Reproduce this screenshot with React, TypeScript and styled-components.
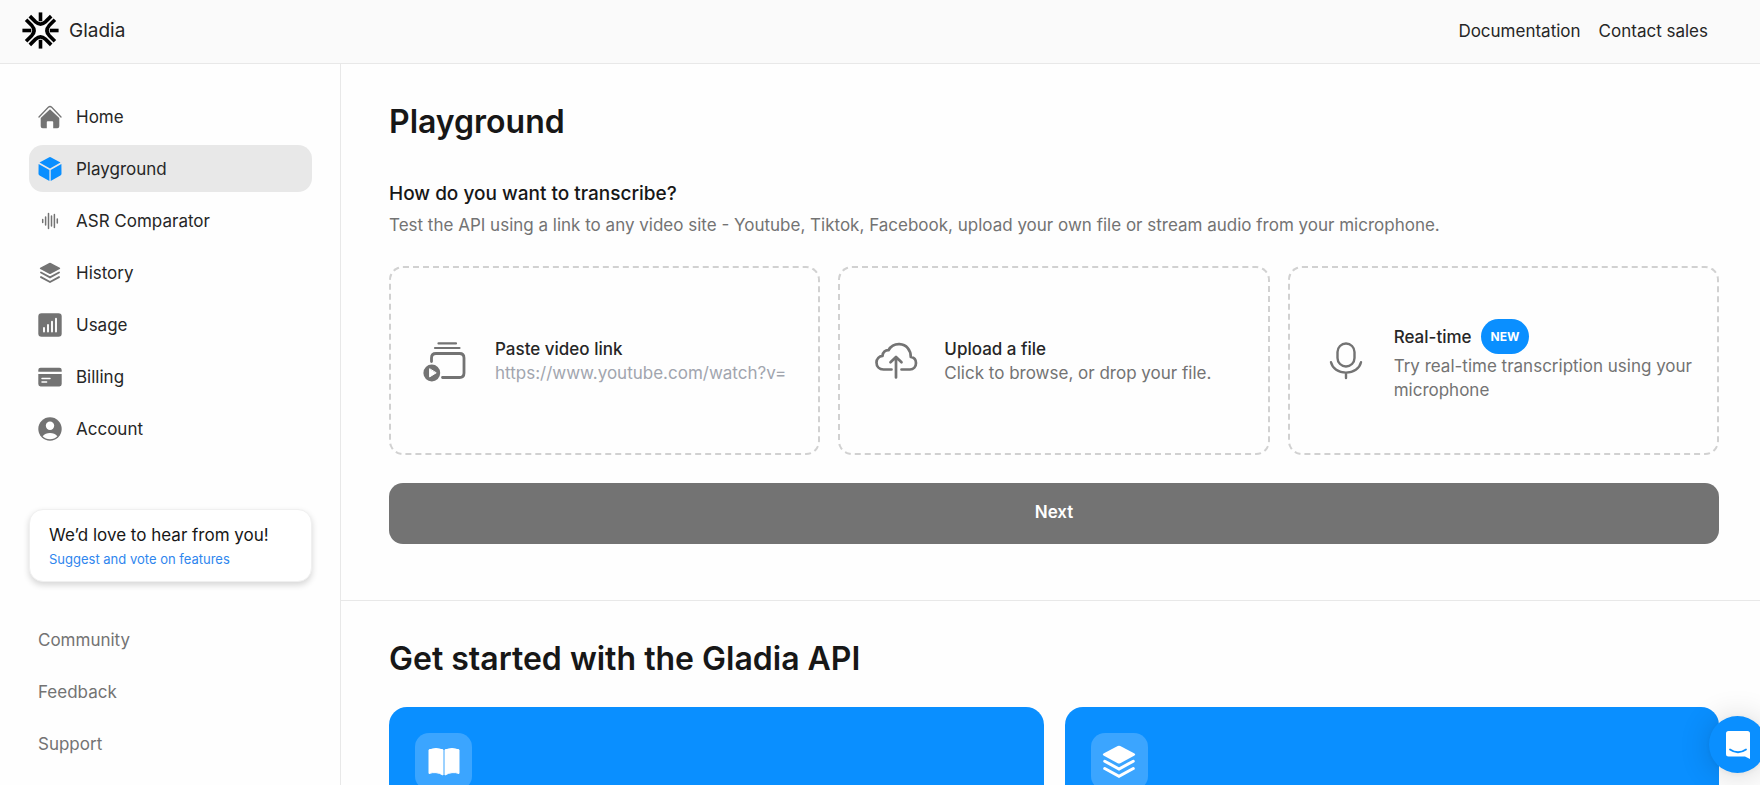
import React from 'react';
import styled, { createGlobalStyle, css } from 'styled-components';

const Global = createGlobalStyle`
  *, *::before, *::after { box-sizing: border-box; }
  body {
    margin: 0;
    background: #fefefe;
    color: #171717;
    font-family: Inter, "Liberation Sans", sans-serif;
    font-size: 16px;
    line-height: 24px;
  }
  h1, h2, p, ul { margin: 0; padding: 0; }
  a { color: inherit; text-decoration: none; }
  button, input { font: inherit; }
  svg { display: block; flex: none; }
`;

const Page = styled.div`
  display: flex;
  flex-direction: column;
  height: 100vh;
  overflow: hidden;
`;

const Header = styled.header`
  display: flex;
  flex: none;
  align-items: center;
  justify-content: space-between;
  height: 64px;
  padding: 0 52px 2px 22px;
  background: #fafafa;
  border-bottom: 1px solid #e8e8e8;
`;

const Brand = styled.a`
  display: flex;
  align-items: center;
  gap: 10px;
  font-size: 19px;
  color: #262626;
`;

const TopLinks = styled.nav`
  display: flex;
  gap: 18px;
  font-size: 17px;
  color: #262626;
`;

const Body = styled.div`
  display: flex;
  flex: 1;
  min-height: 0;
`;

const Sidebar = styled.aside`
  flex: none;
  width: 341px;
  padding: 29px 28px 0 29px;
  border-right: 1px solid #e8e8e8;
  font-size: 17px;
`;

const NavList = styled.ul`
  display: flex;
  flex-direction: column;
  gap: 5px;
  list-style: none;
`;

const NavLink = styled.a<{ $active?: boolean; $muted?: boolean }>`
  display: flex;
  align-items: center;
  gap: 14px;
  height: 47px;
  padding: 0 9px;
  border-radius: 14px;
  color: #262626;
  ${({ $active }) => $active && css`background: #e8e8e8;`}
  ${({ $muted }) => $muted && css`color: #737373;`}
  svg { color: ${({ $active }) => ($active ? '#0a8fff' : '#737373')}; }
`;

const Suggest = styled.section`
  margin: 57px 0 34px;
  padding: 13px 19px 10px;
  background: #fff;
  border: 1px solid #f0f0f0;
  border-radius: 14px;
  box-shadow: 0 3px 6px rgba(0, 0, 0, 0.16);
  color: #171717;
`;

const SuggestLink = styled.a`
  display: block;
  font-size: 13px;
  color: #2f86ee;
`;

const Main = styled.main`
  flex: 1;
  min-width: 0;
`;

const Section = styled.section`
  padding: 40px 41px 0 48px;
`;

const Title = styled.h1`
  font-size: 32px;
  line-height: 36px;
  font-weight: 600;
`;

const Subtitle = styled.h2`
  margin-top: 40px;
  font-size: 19px;
  line-height: 28px;
  font-weight: 500;
`;

const Lead = styled.p`
  margin-top: 5px;
  font-size: 17px;
  color: #737373;
`;

const Options = styled.div`
  display: grid;
  grid-template-columns: repeat(3, 1fr);
  gap: 18px;
  margin-top: 29px;
`;

const dashed = css`
  display: flex;
  align-items: center;
  min-width: 0;
  height: 189px;
  padding: 0 16px 0 32px;
  border: 2px dashed #d1d1d1;
  border-radius: 14px;
  background: transparent;
  text-align: left;
  gap: 24px;
`;

const OptionField = styled.label`${dashed}`;
const OptionButton = styled.button`${dashed}`;

const OptionIcon = styled.span`
  display: flex;
  flex: none;
  justify-content: center;
  width: 48px;
  color: #737373;
`;

const OptionText = styled.span`
  display: flex;
  flex: 1;
  flex-direction: column;
  min-width: 0;
  font-size: 17px;
  line-height: 24px;
  color: #737373;
`;

const OptionTitle = styled.span`
  display: flex;
  align-items: center;
  gap: 9px;
  font-weight: 500;
  color: #262626;
`;

const LinkInput = styled.input`
  width: 100%;
  height: 24px;
  padding: 0;
  border: 0;
  outline: 0;
  background: transparent;
  color: #171717;
  &::placeholder { color: #a1a5ae; opacity: 1; }
`;

const NewBadge = styled.span`
  padding: 0 10px;
  border-radius: 18px;
  background: #0a8fff;
  color: #fff;
  font-size: 12px;
  font-weight: 700;
  line-height: 35px;
`;

const NextButton = styled.button`
  display: block;
  width: 100%;
  height: 61px;
  margin: 28px 0 56px;
  padding: 0 0 3px;
  border: 0;
  border-radius: 14px;
  background: #737373;
  color: #fff;
  font-size: 17px;
  font-weight: 600;
`;

const Divider = styled.hr`
  height: 1px;
  margin: 0;
  border: 0;
  background: #e8e8e8;
`;

const Cards = styled.div`
  display: grid;
  grid-template-columns: repeat(2, 1fr);
  gap: 21px;
  margin-top: 30px;
`;

const Card = styled.a`
  height: 220px;
  padding: 26px;
  border-radius: 18px;
  background: #0a8fff;
`;

const CardIcon = styled.span`
  display: flex;
  align-items: center;
  justify-content: center;
  width: 57px;
  height: 57px;
  border-radius: 14px;
  background: #3ba5ff;
  color: #fff;
`;

const ChatButton = styled.button`
  position: fixed;
  right: -6px;
  bottom: 12px;
  display: flex;
  align-items: center;
  justify-content: center;
  width: 57px;
  height: 57px;
  padding: 0;
  border: 0;
  border-radius: 50%;
  background: #0a8fff;
  box-shadow: 0 1px 6px rgba(0, 0, 0, 0.06), 0 2px 32px rgba(0, 0, 0, 0.16);
`;

const Logo = () => (
  <svg width="37" height="37" viewBox="-18 -18 36 36" fill="none" stroke="#000" strokeWidth="3.500" aria-hidden="true">
    {[0, 90, 180, 270].map((a) => (
      <g key={a} transform={`rotate(${a})`}>
        <path d="M0-17.600V-9" />
        <path d="M-10.400-14-4.800-8.400Q0-4.200 4.800-8.400L10.400-14" />
      </g>
    ))}
  </svg>
);

const HomeIcon = () => (
  <svg width="24" height="24" viewBox="0 0 24 24" aria-hidden="true">
    <path d="M1 12 10.300 2.300Q12 .8 13.700 2.300L23 12" fill="none" stroke="currentColor" strokeWidth="1.300" strokeLinecap="round" />
    <path d="M12 4.200 21.300 13v8.300q0 2-2 2h-4.100v-6.300q0-.8-.8-.8h-4.800q-.8 0-.8.800v6.300H4.700q-2 0-2-2V13Z" fill="currentColor" />
  </svg>
);

const CubeIcon = () => (
  <svg width="24" height="24" viewBox="0 0 24 24" fill="currentColor" aria-hidden="true">
    <path d="M12.700.3 22.500 5.600 12 11.600 1.500 5.600 11.300.3q.7-.4 1.400 0Z" />
    <path d="M.6 7 11.400 13.100V24L1.600 18.600Q.5 18 .5 16.800Z" />
    <path d="M23.400 7 12.700 13.100V24l9.700-5.400q1.100-.6 1.100-1.800Z" />
  </svg>
);

const WaveIcon = () => (
  <svg width="24" height="24" viewBox="0 0 24 24" stroke="currentColor" strokeWidth="1.500" strokeLinecap="round" aria-hidden="true">
    <path d="M4.700 10.500v3M7.600 8v8M10.500 4.500v15M13.500 7v10M16.400 5.500v13M19.300 10v4" />
  </svg>
);

const LayersIcon = ({ size = 24 }: { size?: number }) => (
  <svg width={size} height={size} viewBox="0 0 24 24" fill="currentColor" aria-hidden="true">
    <path d="M11.200 1.900q.8-.4 1.600 0l9 4.800q.9.600 0 1.200l-9 4.900q-.8.400-1.600 0l-9-4.900q-.9-.6 0-1.200Z" />
    <path d="m3 11.500 9 4.900 9-4.900M3 16.100l9 4.900 9-4.900" fill="none" stroke="currentColor" strokeWidth="1.900" strokeLinecap="round" />
  </svg>
);

const UsageIcon = () => (
  <svg width="24" height="24" viewBox="0 0 24 24" aria-hidden="true">
    <rect x=".3" y=".3" width="23.400" height="23.400" rx="3.200" fill="currentColor" />
    <path d="M6 15v3.500M10 12v6.500M14 8.700v9.800M18 5.700v12.800" stroke="#fff" strokeWidth="1.900" strokeLinecap="round" />
  </svg>
);

const BillingIcon = () => (
  <svg width="24" height="24" viewBox="0 0 24 24" aria-hidden="true">
    <path d="M.3 6.800V5q0-2.300 2.300-2.300h18.800q2.300 0 2.300 2.300v1.800ZM.3 9.100h23.400v10q0 2.300-2.300 2.300H2.600Q.3 21.400.3 19.100Z" fill="currentColor" />
    <path d="M4 13.500h8M4 17h4.600" stroke="#fff" strokeWidth="1.500" strokeLinecap="round" />
  </svg>
);

const AccountIcon = () => (
  <svg width="24" height="24" viewBox="0 0 24 24" aria-hidden="true">
    <circle cx="12" cy="12" r="11.700" fill="currentColor" />
    <circle cx="12" cy="8.700" r="4.200" fill="#fff" />
    <path d="M4.600 19.200Q7.400 16 12 16t7.400 3.200Q16.500 22.200 12 22.200T4.600 19.200Z" fill="#fff" />
  </svg>
);

const VideoIcon = () => (
  <svg width="48" height="42" viewBox="0 0 48 42" fill="none" stroke="currentColor" strokeWidth="2.800" strokeLinecap="round" aria-hidden="true">
    <path d="M15.500 3.400h17.500M12 8h24.500" strokeWidth="2.200" />
    <path d="M8.500 21.500v-3.500q0-4.500 4.500-4.500h23.500q4.500 0 4.500 4.500v15q0 4.500-4.500 4.500H19.500" />
    <circle cx="8.800" cy="33" r="8.400" fill="currentColor" stroke="none" />
    <path d="M6.600 29.100v7.800l6.300-3.900Z" fill="#fff" stroke="#fff" strokeWidth="1" />
  </svg>
);

const CloudIcon = () => (
  <svg width="44" height="42" viewBox="0 0 44 42" fill="none" stroke="currentColor" strokeWidth="2.700" strokeLinecap="round" strokeLinejoin="round" aria-hidden="true">
    <path d="M17.500 29.500H9.500C5 29.500 2.500 26.300 2.500 22.500S5.300 16.200 8.500 15.800C8.700 12.300 11.500 10 14.500 10.200C17 6 21 4 25.500 4.200C32.500 4.600 36.800 9.700 36.800 17C40 17.500 42 20 42 23C42 26.800 39.500 29.500 36 29.500H27.500" />
    <path d="M22 37.500V17.500M16.500 22.300 22 17l5.500 5.300" />
  </svg>
);

const MicIcon = () => (
  <svg width="36" height="40" viewBox="0 0 36 40" fill="none" stroke="currentColor" strokeWidth="2.400" strokeLinecap="round" aria-hidden="true">
    <rect x="9.500" y="2.500" width="17" height="23" rx="8.500" />
    <path d="M3 21.200C4.500 27.500 10.300 31.600 18 31.600S31.500 27.500 33 21.200M18 32v5" />
  </svg>
);

const BookIcon = () => (
  <svg width="32" height="28" viewBox="0 0 32 28" fill="currentColor" aria-hidden="true">
    <path d="M1 1.800Q8-.8 15 1.800V27Q8 23 1 25.500ZM17 1.800Q24-.8 31 1.800V25.500Q24 23 17 27Z" stroke="currentColor" strokeLinejoin="round" />
  </svg>
);

const ChatIcon = () => (
  <svg width="26" height="30" viewBox="0 0 26 30" aria-hidden="true">
    <path d="M3.500 1h19q2.500 0 2.500 2.500V29l-5-2.500H3.500Q1 26.500 1 24V3.500Q1 1 3.500 1Z" fill="#fff" />
    <path d="M5 19.500q8 5.500 16 0" fill="none" stroke="#0a8fff" strokeWidth="1.800" strokeLinecap="round" />
  </svg>
);

const navItems = [
  { label: 'Home', Icon: HomeIcon },
  { label: 'Playground', Icon: CubeIcon, active: true },
  { label: 'ASR Comparator', Icon: WaveIcon },
  { label: 'History', Icon: LayersIcon },
  { label: 'Usage', Icon: UsageIcon },
  { label: 'Billing', Icon: BillingIcon },
  { label: 'Account', Icon: AccountIcon },
];

export default function App() {
  return (
    <Page>
      <Global />
      <Header>
        <Brand href="#"><Logo />Gladia</Brand>
        <TopLinks>
          <a href="#docs">Documentation</a>
          <a href="#sales">Contact sales</a>
        </TopLinks>
      </Header>
      <Body>
        <Sidebar>
          <nav>
            <NavList>
              {navItems.map(({ label, Icon, active }) => (
                <li key={label}>
                  <NavLink href="#" $active={active} aria-current={active ? 'page' : undefined}>
                    <Icon />{label}
                  </NavLink>
                </li>
              ))}
            </NavList>
          </nav>
          <Suggest>
            <p>We’d love to hear from you!</p>
            <SuggestLink href="#features">Suggest and vote on features</SuggestLink>
          </Suggest>
          <NavList>
            {['Community', 'Feedback', 'Support'].map((label) => (
              <li key={label}><NavLink href="#" $muted>{label}</NavLink></li>
            ))}
          </NavList>
        </Sidebar>
        <Main>
          <Section>
            <Title>Playground</Title>
            <Subtitle>How do you want to transcribe?</Subtitle>
            <Lead>Test the API using a link to any video site - Youtube, Tiktok, Facebook, upload your own file or stream audio from your microphone.</Lead>
            <Options>
              <OptionField>
                <OptionIcon><VideoIcon /></OptionIcon>
                <OptionText>
                  <OptionTitle>Paste video link</OptionTitle>
                  <LinkInput type="url" placeholder="https://www.youtube.com/watch?v=" />
                </OptionText>
              </OptionField>
              <OptionButton type="button">
                <OptionIcon><CloudIcon /></OptionIcon>
                <OptionText>
                  <OptionTitle>Upload a file</OptionTitle>
                  <span>Click to browse, or drop your file.</span>
                </OptionText>
              </OptionButton>
              <OptionButton type="button">
                <OptionIcon><MicIcon /></OptionIcon>
                <OptionText>
                  <OptionTitle>Real-time<NewBadge>NEW</NewBadge></OptionTitle>
                  <span>Try real-time transcription using your microphone</span>
                </OptionText>
              </OptionButton>
            </Options>
            <NextButton type="button">Next</NextButton>
          </Section>
          <Divider />
          <Section>
            <Title as="h2">Get started with the Gladia API</Title>
            <Cards>
              <Card href="#docs" aria-label="Documentation"><CardIcon><BookIcon /></CardIcon></Card>
              <Card href="#samples" aria-label="Samples"><CardIcon><LayersIcon size={38} /></CardIcon></Card>
            </Cards>
          </Section>
        </Main>
      </Body>
      <ChatButton type="button" aria-label="Open chat"><ChatIcon /></ChatButton>
    </Page>
  );
}
